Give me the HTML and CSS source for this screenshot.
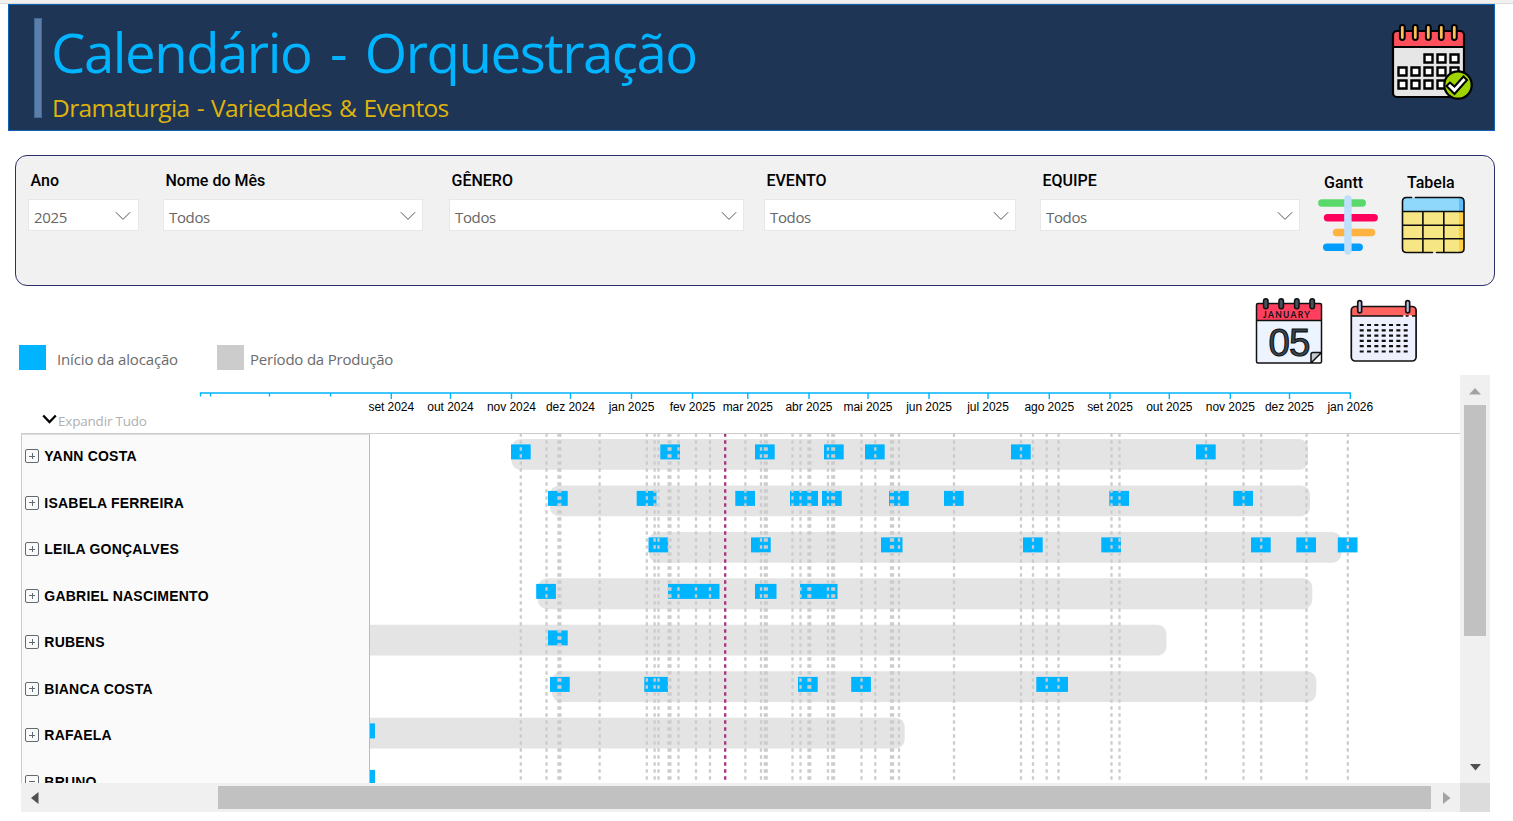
FILE: index.html
```html
<!DOCTYPE html>
<html lang="pt-BR">
<head>
<meta charset="utf-8">
<title>Calendário - Orquestração</title>
<link rel="stylesheet" href="styles.css">
</head>
<body>
<div class="topline"></div>
<header class="banner">
  <div class="accent"></div>
  <div class="titles">
    <h1>Calendário - Orquestração</h1>
    <p>Dramaturgia - Variedades &amp; Eventos</p>
  </div>
  <svg class="banner-icon" width="84" height="80" viewBox="1391 23 84 80">
    <rect x="1393" y="31" width="71" height="66" rx="4" fill="#e6e6e6"/>
    <path d="M1393 35q0-4 4-4h63q4 0 4 4v12h-71z" fill="#ff4f5a"/>
    <rect x="1393" y="31" width="71" height="66" rx="4" fill="none" stroke="#000" stroke-width="2.2"/>
    <path d="M1393 47h71" stroke="#000" stroke-width="2.2"/>
    <path d="M1402.3 27.500v10M1415.3 27.500v10M1428.3 27.500v10M1441.3 27.500v10M1454.3 27.500v10" stroke="#000" stroke-width="6.800" stroke-linecap="round"/>
    <path d="M1402.3 27.5v10M1415.3 27.5v10M1428.3 27.5v10M1441.3 27.5v10M1454.3 27.5v10" stroke="#fdbf57" stroke-width="2.8" stroke-linecap="round"/>
    <g fill="#fff" stroke="#000" stroke-width="2.4">
      <path d="M1424.5 54.500h8v8h-8zM1437.500 54.500h8v8h-8zM1450.500 54.500h8v8h-8zM1398.500 67.500h8v8h-8zM1411.500 67.500h8v8h-8zM1424.500 67.500h8v8h-8zM1437.500 67.500h8v8h-8zM1450.500 67.500h8v8h-8zM1398.500 80.500h8v8h-8zM1411.500 80.500h8v8h-8zM1424.500 80.500h8v8h-8zM1437.500 80.500h8v8h-8z"/>
    </g>
    <circle cx="1458" cy="85" r="13.7" fill="#9fd400" stroke="#000" stroke-width="2.2"/>
    <path d="M1446.500 86l3.500-3.500 4.500 4 9-10 3.500 3.500-12.500 14z" fill="#fff" stroke="#000" stroke-width="2"/>
  </svg>
</header>

<section class="filters">
  <div class="filter f-ano"><label>Ano</label><div class="select"><span>2025</span><svg width="16" height="10" viewBox="0 0 16 10"><path d="M.8 1.200 8 8.400l7.200-7.200"/></svg></div></div>
  <div class="filter f-mes"><label>Nome do Mês</label><div class="select"><span>Todos</span><svg width="16" height="10" viewBox="0 0 16 10"><path d="M.8 1.200 8 8.400l7.200-7.200"/></svg></div></div>
  <div class="filter f-gen"><label>GÊNERO</label><div class="select"><span>Todos</span><svg width="16" height="10" viewBox="0 0 16 10"><path d="M.8 1.200 8 8.400l7.200-7.200"/></svg></div></div>
  <div class="filter f-eve"><label>EVENTO</label><div class="select"><span>Todos</span><svg width="16" height="10" viewBox="0 0 16 10"><path d="M.8 1.200 8 8.400l7.200-7.200"/></svg></div></div>
  <div class="filter f-equ"><label>EQUIPE</label><div class="select"><span>Todos</span><svg width="16" height="10" viewBox="0 0 16 10"><path d="M.8 1.200 8 8.400l7.200-7.200"/></svg></div></div>
  <div class="view v-gantt"><span>Gantt</span>
    <svg width="62" height="62" viewBox="1317 194 62 62" stroke-linecap="round" stroke-width="7.400">
      <path d="M1321.800 203h40.500" stroke="#5ad96b"/>
      <path d="M1327.500 217.700h46.700" stroke="#ff005c"/>
      <path d="M1336.500 232.500h35" stroke="#ffb240"/>
      <path d="M1326.700 247.300h32.500" stroke="#009dff"/>
      <path d="M1347.900 199v52" stroke="#bfdfff"/>
    </svg>
  </div>
  <div class="view v-tabela"><span>Tabela</span>
    <svg width="66" height="62" viewBox="1400 194 66 62">
      <rect x="1402.500" y="197.500" width="61.500" height="55" rx="4" fill="#f7e684"/>
      <path d="M1459 211h5v38q0 3.500-5 3.500z" fill="#ffcf42"/>
      <path d="M1402.500 211v-9q0-4.500 4.500-4.500h52v14z" fill="#8fd8fb"/>
      <path d="M1459 197.500q5 0 5 5v9h-5z" fill="#5ebcfa"/>
      <path d="M1402.500 211.500h61.500M1402.500 225.200h61.500M1402.500 238.800h61.500M1422.900 211.500v41M1443.800 211.500v41" stroke="#0c0c0c" stroke-width="1.600"/>
      <path d="M1411.500 197.500h-5q-4 0-4 4v47q0 4 4 4h26M1415.500 197.500h44.500q4 0 4 4v47q0 4-4 4h-23.500" fill="none" stroke="#0c0c0c" stroke-width="1.600" stroke-linecap="round"/>
    </svg>
  </div>
</section>

<section class="tools">
  <div class="legend">
    <i class="sw start"></i><span class="l1">Início da alocação</span>
    <i class="sw period"></i><span class="l2">Período da Produção</span>
  </div>
  <svg class="cal-day" width="70" height="70" viewBox="1254 296 70 70">
    <path d="M1256.500 305q0-1.500 1.500-1.500h62q1.500 0 1.500 1.500v47l-10.500 11h-53q-1.500 0-1.500-1.500z" fill="#edf4ff"/>
    <path d="M1256.500 305q0-1.500 1.500-1.500h62q1.500 0 1.500 1.500v15.500h-65z" fill="#ff3f5d"/>
    <path d="M1311 363v-8.500q0-2 2-2h8.500l-10.500 10.500z" fill="#c5cad1"/>
    <path d="M1256.500 305q0-1.500 1.500-1.500h62q1.500 0 1.500 1.500v56.500q0 1.500-1.500 1.500h-62q-1.500 0-1.500-1.500zM1256.500 320.500h65M1311 363v-8.500q0-2 2-2h8.500M1311.500 362.500l9.500-9.500" fill="none" stroke="#111" stroke-width="1.500"/>
    <path d="M1265.800 301v5.500M1281.200 301v5.500M1296.800 301v5.500M1312.200 301v5.500" stroke="#111" stroke-width="6" stroke-linecap="round"/>
    <path d="M1265.800 301v5.500M1281.200 301v5.500M1296.800 301v5.500M1312.200 301v5.500" stroke="#45525c" stroke-width="3" stroke-linecap="round"/>
    <text x="1263" y="318" class="jan">JANUARY</text>
    <text x="1289" y="355.500" class="day">05</text>
  </svg>
  <svg class="cal-month" width="70" height="70" viewBox="1349 296 70 70">
    <rect x="1351.300" y="306.500" width="64.800" height="54.500" rx="4" fill="#eef0fd"/>
    <path d="M1351.300 316v-6q0-3.500 3.500-3.500h58q3.500 0 3.500 3.500v6z" fill="#ff625f"/>
    <rect x="1351.300" y="306.500" width="64.800" height="54.500" rx="4" fill="none" stroke="#111" stroke-width="1.700"/>
    <path d="M1351.300 316h52M1405.500 316h3M1412 316h4" stroke="#111" stroke-width="1.700"/>
    <path d="M1403.500 316h2M1409 316h2.500" stroke="#fff" stroke-width="1.700"/>
    <path d="M1359.700 302.500v8.500M1407.700 302.500v8.500" stroke="#111" stroke-width="5.600" stroke-linecap="round"/>
    <path d="M1359.700 302.500v8.500M1407.700 302.500v8.500" stroke="#b6bfe0" stroke-width="2.200" stroke-linecap="round"/>
    <path d="M1359.700 325h50M1359.700 330.300h50M1359.700 335.600h50M1359.700 340.900h50M1359.700 346.200h50M1359.700 351.500h50" stroke="#111" stroke-width="2.200" stroke-dasharray="4 3.330"/>
  </svg>
</section>

<section class="chart">
  <div class="area">
    <div class="head">
      <svg class="axis" width="1439" height="58" viewBox="21 375 1439 58">
        <path id="axis-line" fill="none" stroke="#00b4ff" stroke-width="1.400"/>
        <g id="axis-labels"></g>
      </svg>
      <div class="expand"><svg width="15" height="10" viewBox="0 0 15 10"><path d="M1.200 1.500 7.500 8l6.300-6.500" fill="none" stroke="#000" stroke-width="2.300"/></svg><span>Expandir Tudo</span></div>
    </div>
    <div class="body">
      <ul class="names">
        <li><i class="box plus"></i>YANN COSTA</li>
        <li><i class="box plus"></i>ISABELA FERREIRA</li>
        <li><i class="box plus"></i>LEILA GONÇALVES</li>
        <li><i class="box plus"></i>GABRIEL NASCIMENTO</li>
        <li><i class="box plus"></i>RUBENS</li>
        <li><i class="box plus"></i>BIANCA COSTA</li>
        <li><i class="box plus"></i>RAFAELA</li>
        <li><i class="box"></i>BRUNO</li>
      </ul>
      <svg class="plot" width="1090" height="349" viewBox="370 434 1090 349">
        <g id="bars" fill="#e4e4e4"></g>
        <g id="marks" fill="#00b4ff"></g>
        <path id="days" fill="none" stroke="#ccc" stroke-width="2.300" stroke-dasharray="3.500 3.500"/>
        <path d="M725.200 433.200V783" stroke="#a8327c" stroke-width="2.300" stroke-dasharray="3.500 3.500"/>
      </svg>
    </div>
  </div>
  <div class="vbar"><svg width="12" height="7" viewBox="0 0 12 7"><path d="M6 0l6 6.500H0z" fill="#a3a3a3"/></svg><div class="vthumb"></div><svg class="down" width="11" height="7" viewBox="0 0 11 7"><path d="M0 0h11L5.500 6.500z" fill="#505050"/></svg></div>
  <div class="hbar"><svg width="8" height="12" viewBox="0 0 8 12"><path d="M7.500 0v12L0 6z" fill="#505050"/></svg><div class="hthumb"></div><svg class="right" width="8" height="12" viewBox="0 0 8 12"><path d="M0 0v12l7.500-6z" fill="#a3a3a3"/></svg></div>
  <div class="corner"></div>
</section>
<script src="chart.js"></script>
</body>
</html>
```
FILE: styles.css
```css
* { box-sizing: border-box; }
body { margin: 0; width: 1513px; height: 821px; overflow: hidden; background: #fff; font-family: "Open Sans", "Noto Sans", sans-serif; }
svg { display: block; flex: none; }
.topline { height: 4px; background: #f1f0ef; border-bottom: 1px solid #d9d9d9; }
.banner { display: flex; width: 1487px; height: 127px; margin-left: 8px; background: #1e3556; border: 1px solid #1164b4; }
.accent { width: 8px; height: 100px; margin: 13px 0 0 25px; background: #5b7fa8; border: 1px solid #446a94; }
.titles { flex: 1; padding-left: 9px; white-space: nowrap; }
h1 { margin: 10px 0 0; font-size: 54.500px; line-height: 75px; font-weight: 400; letter-spacing: -1.450px; word-spacing: 6px; color: #00b4ff; }
.titles p { margin: 1px 0 0 1px; font-size: 24.500px; line-height: 34px; letter-spacing: -0.650px; word-spacing: 1.500px; color: #deb40c; }
.banner-icon { margin: 18px 19px 0 0; }

.filters { display: flex; width: 1480px; height: 131px; margin: 24px 0 0 15px; padding-left: 12px; background: #f1f1f1; border: 1px solid #2c3068; border-radius: 12px; }
.filter label { display: block; margin: 15px 0 8px 2.500px; height: 20px; font: 500 16px/20px Roboto, sans-serif; color: #000; white-space: nowrap; }
.select { display: flex; align-items: center; justify-content: space-between; height: 32px; padding: 3px 6.500px 0 5px; background: #fff; border: 1px solid #e8e8e8; font-size: 15px; letter-spacing: -0.350px; color: #666; }
.select svg { margin-top: -2px; fill: none; stroke: #555; stroke-width: 1; }
.f-ano { width: 110.500px; }
.f-mes { width: 260px; margin-left: 24.500px; }
.f-gen { width: 295px; margin-left: 26px; }
.f-eve { width: 252px; margin-left: 20px; }
.f-equ { width: 260px; margin-left: 24px; }
.view { display: flex; flex-direction: column; padding-top: 17px; font: 500 16px/20px Roboto, sans-serif; }
.view span { height: 21px; padding-left: 7px; white-space: nowrap; }
.v-gantt { width: 62px; margin-left: 17px; }
.v-tabela { width: 66px; margin-left: 21px; }

.tools { display: flex; height: 89px; padding-top: 10px; }
.legend { display: flex; align-items: flex-start; width: 1235px; margin: 49px 0 0 19px; font-size: 15px; line-height: 28px; color: #6b6b6b; white-space: nowrap; }
.sw { width: 27px; height: 25px; flex: none; }
.start { background: #00b4ff; }
.period { background: #ccc; }
.l1 { width: 171px; padding-left: 11px; letter-spacing: -0.150px; }
.l2 { padding-left: 6px; letter-spacing: -0.200px; }
.cal-month { margin-left: 25px; }
.jan { font: bold 8.500px Lato, sans-serif; letter-spacing: 1.350px; fill: #111; }
.day { font: 38.500px "Liberation Sans", sans-serif; text-anchor: middle; letter-spacing: -1px; fill: #3a464f; stroke: #0c0f12; stroke-width: 1.100; }

.chart { display: grid; grid-template: 408px 29px / 1439px 30px; margin-left: 21px; }
.area { overflow: hidden; }
.head { display: grid; height: 59px; border-bottom: 1px solid #ccc; }
.axis, .expand { grid-area: 1 / 1; }
.axis text { font: 12px "Liberation Sans", Arial, sans-serif; text-anchor: middle; letter-spacing: -0.050px; fill: #000; }
.expand { display: flex; align-items: flex-start; padding: 37px 0 0 21px; font-size: 13.500px; line-height: 18px; letter-spacing: -0.200px; color: #b0b0b0; }
.expand svg { margin-top: 2px; }
.expand span { margin-left: 1px; }
.body { display: flex; height: 349px; overflow: hidden; }
.names { width: 349px; height: 100%; margin: 0; padding: 0; list-style: none; background: #fafafa; border-left: 1px solid #ccc; border-right: 1px solid #bbb; border-top: 1px solid #ddd; }
.names li { display: flex; align-items: center; height: 46.500px; padding-left: 3px; margin-top: 0; font: bold 14px/20px "Liberation Sans", Arial, sans-serif; letter-spacing: 0.220px; color: #000; }
.names li:first-child { height: 42.500px; }
.names li:nth-child(2) { height: 49.500px; }
.names li:nth-child(2), .names li:first-child { padding-top: 0; }
.names li:nth-child(2) { height: 46.500px; margin-top: 2px; }
.box { position: relative; width: 14px; height: 14px; margin-right: 5.300px; border: 1px solid #5f6b70; border-radius: 2px; }
.box::before { content: ""; position: absolute; left: 3px; top: 5.500px; width: 6px; height: 1px; background: #5f6b70; }
.plus::after { content: ""; position: absolute; left: 5.500px; top: 3px; width: 1px; height: 6px; background: #5f6b70; }
.vbar { display: flex; flex-direction: column; align-items: center; background: #f0f0f0; padding-top: 13px; }
.vthumb { width: 22px; height: 231px; margin-top: 10px; background: #c1c1c1; }
.down { margin-top: 128px; }
.hbar { display: flex; align-items: center; padding-left: 10px; background: #f0f0f0; }
.hthumb { width: 1213px; height: 23px; margin-left: 179px; background: #c1c1c1; }
.right { margin-left: 12px; }
.corner { background: #dcdcdc; }
```
FILE: chart.js
```js
const months = [
  [391.3, 'set 2024'], [450.5, 'out 2024'], [511.5, 'nov 2024'], [570.5, 'dez 2024'],
  [631.5, 'jan 2025'], [692.5, 'fev 2025'], [747.8, 'mar 2025'], [809, 'abr 2025'],
  [868, 'mai 2025'], [929, 'jun 2025'], [988, 'jul 2025'], [1049.3, 'ago 2025'],
  [1110, 'set 2025'], [1169.3, 'out 2025'], [1230.3, 'nov 2025'], [1289.5, 'dez 2025'],
  [1350.3, 'jan 2026']
];
const days = [520.8, 546.5, 558.5, 560.3, 599.6, 646.8, 654.6, 658.5, 668.6, 670.4, 678.5, 696, 710,
  745.4, 761, 764.9, 766.7, 792.5, 800.5, 808.5, 810.2, 828, 832.3, 834, 861.5, 875.3, 891, 893, 899,
  954, 1021, 1033, 1046.7, 1058.5, 1111.5, 1119.5, 1206, 1243.5, 1261.2, 1306.5, 1347.8];
const rows = [
  { bar: [511.5, 1308], marks: [[511], [660.3], [755], [824], [865], [1011], [1196]] },
  { bar: [550, 1310], marks: [[548], [636.7], [735.3], [790, 818], [822], [889], [944], [1109.3], [1233.3]] },
  { bar: [649, 1341.5], marks: [[648.5], [751], [881, 902.5], [1023], [1101.3], [1251], [1296.3], [1337.8]] },
  { bar: [538, 1312.3], marks: [[536.2], [668, 719.5], [755, 776.5], [800, 837.5]] },
  { bar: [350, 1166.5], marks: [[548]] },
  { bar: [552, 1316.3], marks: [[550], [644.3, 668], [798], [851.2], [1036.3, 1068]] },
  { bar: [350, 904.7], marks: [[355, 375]] },
  { marks: [[355, 375]] }
];

const rect = (x, y, w, h, r) => `<rect x="${x}" y="${y}" width="${w}" height="${h}" rx="${r}"/>`;
const el = id => document.getElementById(id);

el('axis-line').setAttribute('d', 'M200.5 396.500V393H1350.300V399' +
  'M210.500 393V396.500M269.500 393V396.500M330.500 393V396.500' +
  months.map(m => `M${m[0]} 393V399`).join(''));
el('axis-labels').innerHTML = months.map(m => `<text x="${m[0]}" y="411">${m[1]}</text>`).join('');
el('days').setAttribute('d', days.map(x => `M${x} 433.200V783`).join(''));
el('bars').innerHTML = rows.map((r, i) => r.bar
  ? rect(r.bar[0], 439 + i * 46.45, r.bar[1] - r.bar[0], 30.8, 9) : '').join('');
el('marks').innerHTML = rows.map((r, i) => r.marks.map(([a, b]) =>
  rect(a, 444.4 + i * 46.5, (b || a + 19.7) - a, 15, 0)).join('')).join('');
```
